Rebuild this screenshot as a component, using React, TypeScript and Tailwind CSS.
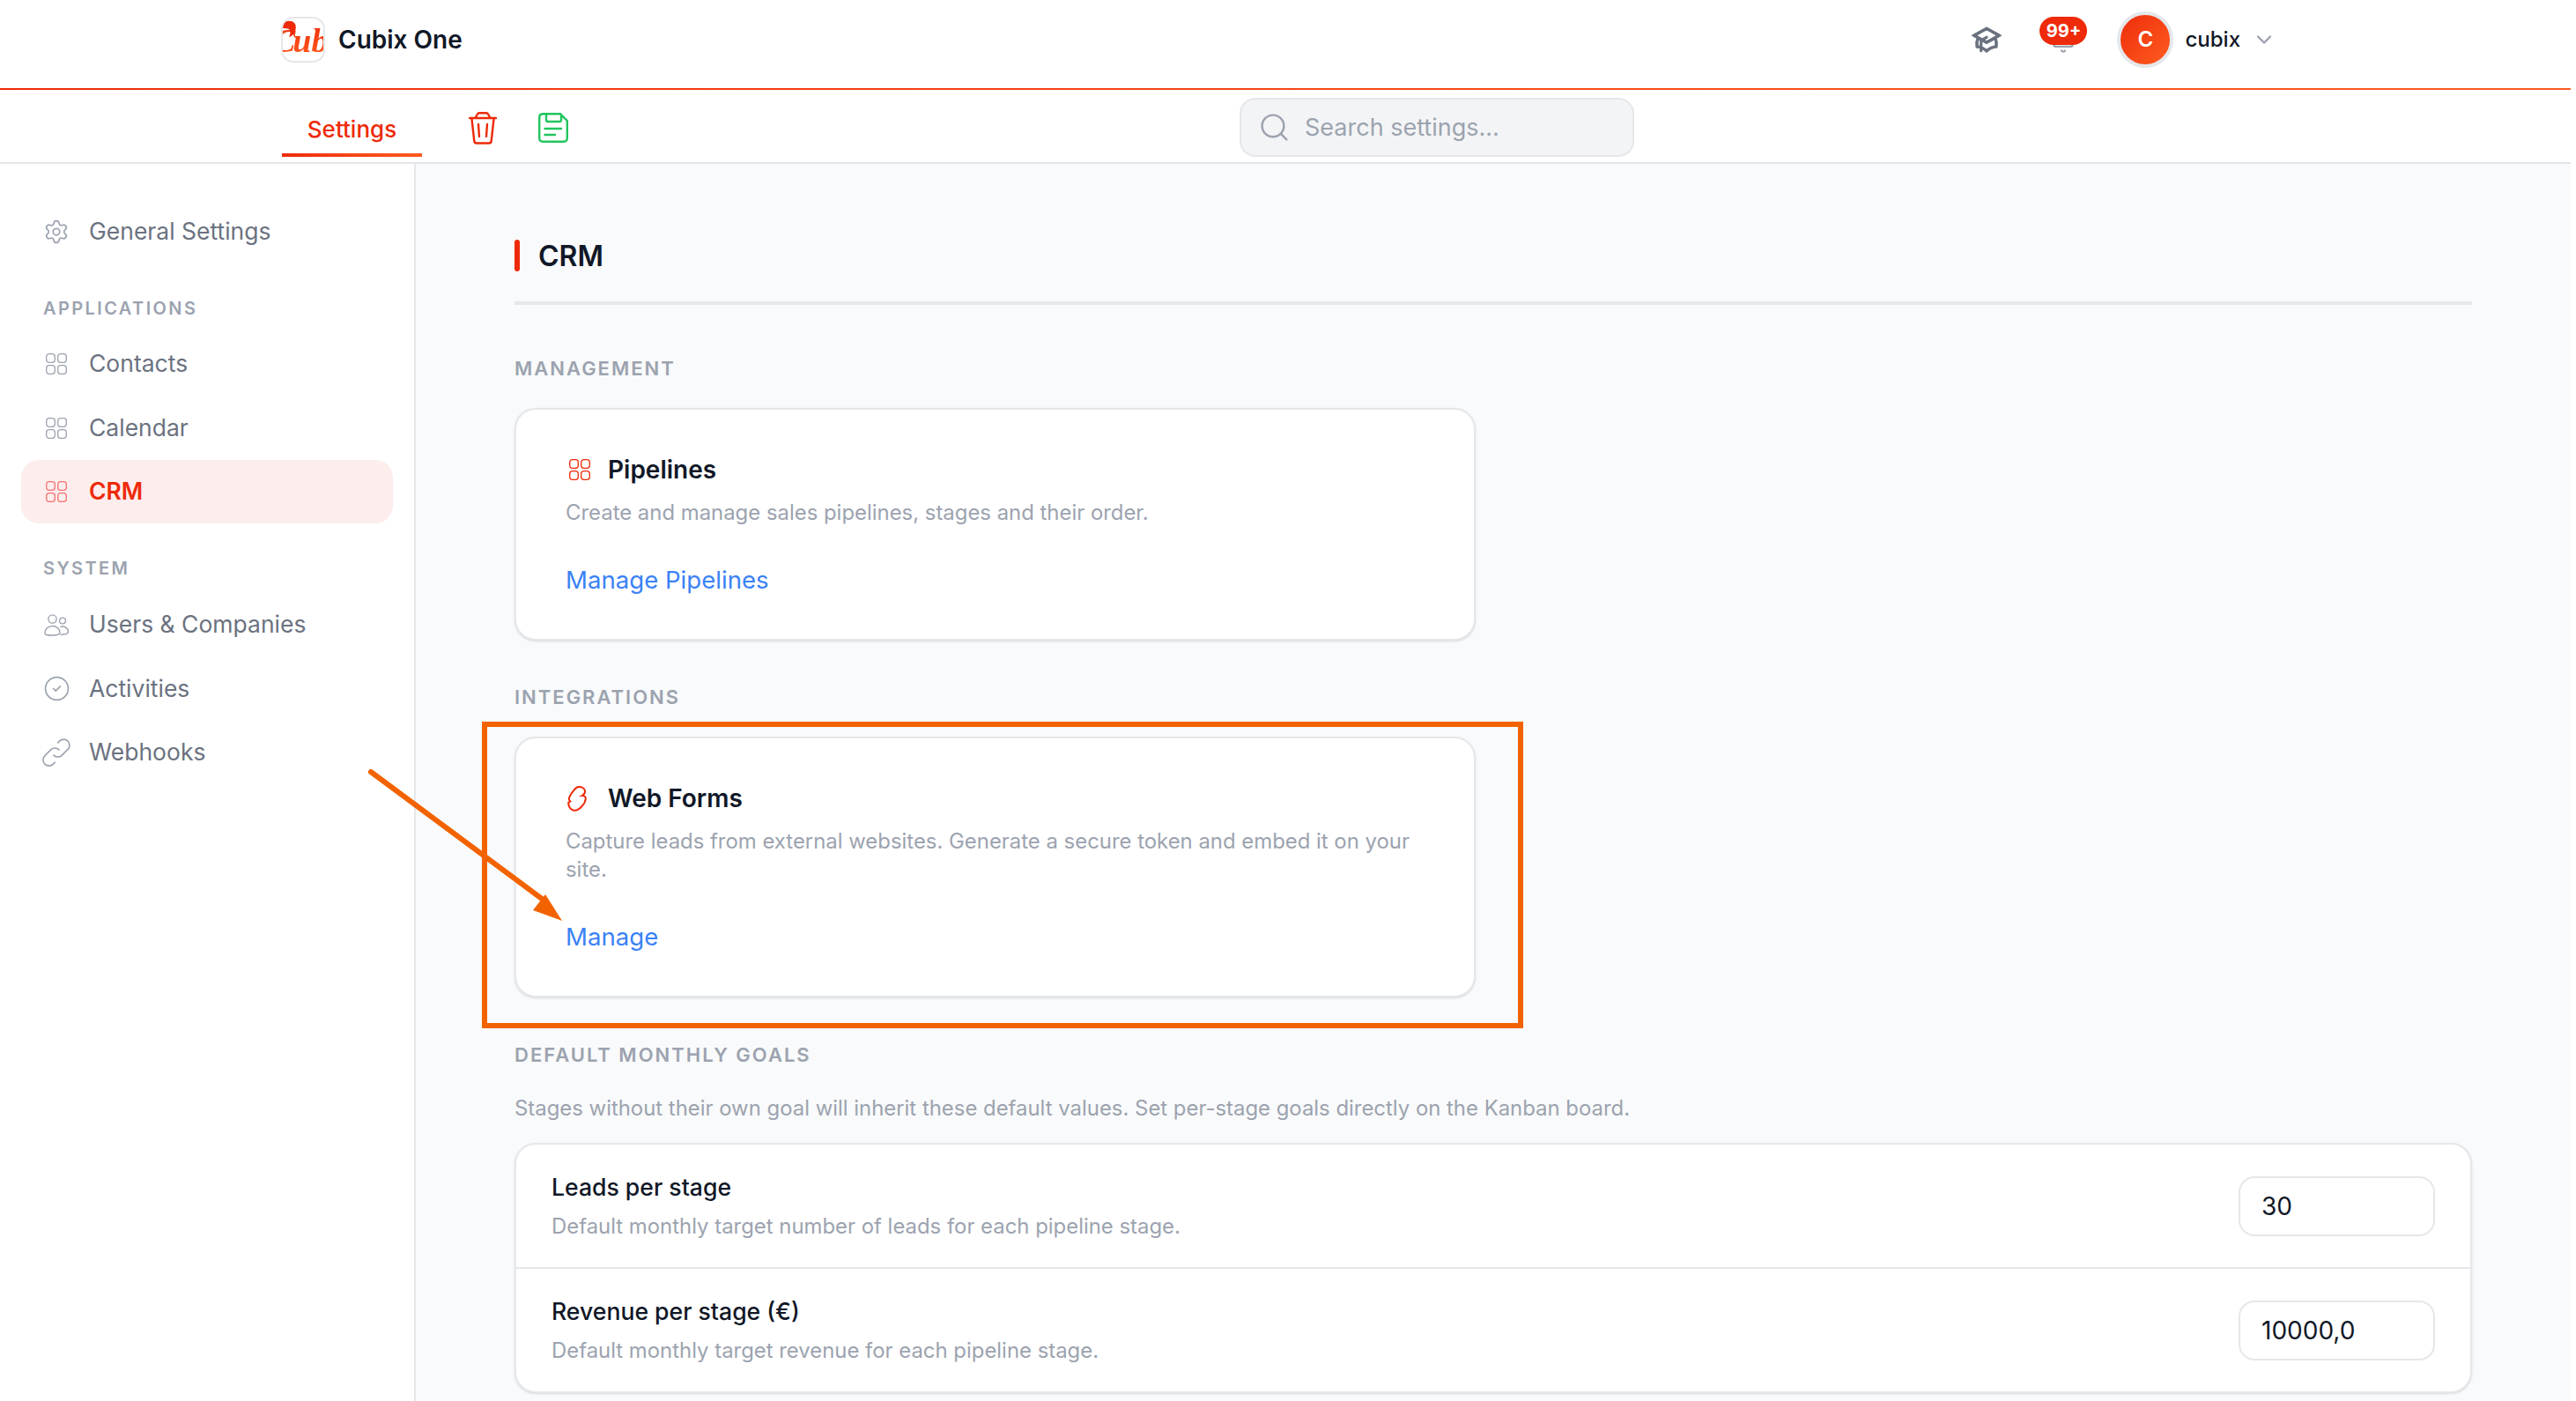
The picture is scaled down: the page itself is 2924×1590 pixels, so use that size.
import { Bell, ChevronDown, CircleCheck, Search, Settings } from "lucide-react";
import { HiOutlineAcademicCap, HiOutlineLink } from "react-icons/hi";

function GridIcon({ className }: { className?: string }) {
  return (
    <svg viewBox="0 0 24 24" fill="none" stroke="currentColor" strokeWidth="1.3" className={className}>
      <rect x="0.7" y="0.7" width="9.6" height="9.6" rx="3" />
      <rect x="13.7" y="0.7" width="9.6" height="9.6" rx="3" />
      <rect x="0.7" y="13.7" width="9.6" height="9.6" rx="3" />
      <rect x="13.7" y="13.7" width="9.6" height="9.6" rx="3" />
    </svg>
  );
}

function UsersIcon() {
  return (
    <svg viewBox="0 0 28 25" fill="none" stroke="#9ca3af" strokeWidth="1.4" className="h-[25px] w-[28px]">
      <circle cx="9.5" cy="5.5" r="4.6" />
      <circle cx="21" cy="7.5" r="3.4" />
      <path d="M1 21.5C1 17 4.5 13.5 9.5 13.5S18 17 18 20.8C18 23 16 24 9.5 24S1 23.5 1 21.5Z" />
      <path d="M18.5 14.5C23 13 27.5 16 27.5 20C27.5 22.2 25.5 23.2 18.5 23.2" />
    </svg>
  );
}

function WebFormIcon() {
  return (
    <svg viewBox="0 0 22 29" fill="none" stroke="#ee2a0a" strokeWidth="2" className="-ml-[2px] h-[29px] w-[22px]">
      <path d="M11 1.5C15 0 19.5 2 20 5.5C20.3 8 18.5 10 16.7 11C19 11 21 12 20.8 14.5C20.5 18 19 20.5 16.5 23C13.5 26.5 10 28.5 6.5 27.5C3 26.5 1 22.5 1.2 18.8L3.3 17.6C2 16.5 1.6 15 2.2 13C3 10.5 4.5 8.5 6 6.7C7.5 4.5 9 2.5 11 1.5Z" />
    </svg>
  );
}

function NavItem({ icon, label, active }: { icon: React.ReactNode; label: string; active?: boolean }) {
  return (
    <div
      className={`mx-[24px] flex h-[72px] items-center gap-[23px] rounded-[20px] pl-[26px] text-[26.5px] ${
        active ? "bg-[#fdeded] font-semibold text-[#ee2a0a]" : "text-[#6b7280]"
      }`}
    >
      <span className="flex w-[28px] shrink-0 justify-center">{icon}</span>
      {label}
    </div>
  );
}

function SectionLabel({ children, className }: { children: React.ReactNode; className?: string }) {
  return (
    <div className={`h-[28px] text-[22px] leading-[28px] font-semibold tracking-[2px] text-[#9ca3af] ${className ?? ""}`}>
      {children}
    </div>
  );
}

function ActionCard({
  icon,
  title,
  desc,
  link,
}: {
  icon: React.ReactNode;
  title: string;
  desc: string;
  link: string;
}) {
  return (
    <div className="w-[1091px] rounded-[24px] border-2 border-[#e5e7eb] bg-white px-[56px] pt-[50px] pb-[47px] shadow-sm">
      <div className="flex h-[36px] items-center">
        <span className="flex w-[48px] pl-[4px]">{icon}</span>
        <span className="text-[28px] font-semibold text-[#111827]">{title}</span>
      </div>
      <p className="mt-[15px] text-[23.9px] leading-[32px] text-[#9ca3af]">{desc}</p>
      <a className="mt-[40px] block text-[27.6px] leading-[40px] text-[#3b82f6]">{link}</a>
    </div>
  );
}

function GoalRow({ label, hint, value }: { label: string; hint: string; value: string }) {
  return (
    <div className="flex h-[139px] items-center justify-between px-[40px]">
      <div>
        <div className="text-[26.6px] leading-[36px] font-medium text-[#111827]">{label}</div>
        <div className="mt-[11px] text-[23.9px] leading-[32px] text-[#9ca3af]">{hint}</div>
      </div>
      <input
        readOnly
        value={value}
        className="h-[68px] w-[223px] rounded-[18px] border-2 border-[#e5e7eb] bg-white pl-[24px] text-[28px] text-[#111827] outline-none"
      />
    </div>
  );
}

export default function App() {
  return (
    <div className="relative flex h-[1590px] w-[2924px] overflow-hidden bg-white font-[Inter,sans-serif]">
      <div className="flex h-full w-[2918px] flex-col">
        {/* top bar */}
        <header className="flex h-[100px] shrink-0 items-center pb-[10px] pl-[319px]">
          <div className="relative h-[52px] w-[50px] overflow-hidden rounded-[14px] border-2 border-[#e5e7eb] bg-white">
            <span className="absolute top-[3px] left-[-11px] bg-gradient-to-b from-[#ee2a0a] to-[#ff5a1f] bg-clip-text font-['Liberation_Serif',serif] text-[38px] leading-[44px] font-bold whitespace-nowrap text-transparent italic">
              <span className="mr-[-3px]">C</span>ub
            </span>
            <svg viewBox="0 0 18 20" className="absolute top-[2px] left-0 h-[20px] w-[18px]">
              <path d="M0 4C4 0 10 0 13 3C16 6 15 12 12 16C10 18 8 19 7 19C9 15 9 12 7 10C5 9 2 9 0 9Z" fill="#ee2a0a" />
            </svg>
          </div>
          <span className="ml-[15px] text-[28px] font-semibold text-[#111827]">Cubix One</span>
          <HiOutlineAcademicCap className="ml-auto h-[38px] w-[38px] text-[#6b7280]" />
          <div className="relative ml-[41px] h-[64px] w-[54px]">
            <Bell className="absolute top-[20px] left-[13px] h-[28px] w-[28px] text-[#9ca3af]" strokeWidth={2} />
            <span className="absolute top-[6px] left-0 flex h-[32px] w-[54px] items-center justify-center rounded-full bg-[#ee2a0a] text-[20px] font-bold text-white">
              99+
            </span>
          </div>
          <div className="ml-[34px] flex h-[64px] w-[64px] items-center justify-center rounded-full border-4 border-[#e5e7eb] bg-gradient-to-br from-[#ee2a0a] to-[#ff5a1f] text-[24px] font-semibold text-white">
            C
          </div>
          <span className="ml-[13px] text-[24px] font-medium text-[#111827]">cubix</span>
          <ChevronDown className="mr-[334px] ml-[13px] h-[28px] w-[28px] text-[#9ca3af]" strokeWidth={2} />
        </header>
        <div className="h-[2px] shrink-0 bg-gradient-to-r from-[#ee2a0a] to-[#ff5a1f]" />

        {/* sub bar */}
        <div className="flex h-[84px] shrink-0 items-center border-b-2 border-[#e5e7eb] pt-[3px] pl-[320px]">
          <div className="relative flex h-[79px] w-[159px] items-center justify-center pt-[3px] text-[26px] font-medium text-[#ee2a0a]">
            Settings
            <span className="absolute top-[69px] right-0 left-0 h-[4px] bg-gradient-to-r from-[#ee2a0a] to-[#ff5a1f]" />
          </div>
          <svg viewBox="0 0 32 37" fill="none" stroke="#ee2a0a" strokeWidth="2.4" strokeLinecap="round" className="mt-[1px] ml-[53px] h-[37px] w-[32px]">
            <path d="M1 7L31 7M8 6L10 2.5Q10.6 1.2 12 1.2H20Q21.4 1.2 22 2.5L24 6M3.5 8L6.3 33Q6.6 35.5 9 35.5H23Q25.4 35.5 25.7 33L28.5 8M11 14L12 28M21 14L20 28" />
          </svg>
          <svg viewBox="0 0 34 34" fill="none" stroke="#22c55e" strokeWidth="2.4" strokeLinecap="round" className="mt-[1px] ml-[47px] h-[34px] w-[34px]">
            <path d="M5 1.2H25L32.8 9V29A4 4 0 0 1 29 32.8H5A4 4 0 0 1 1.2 29V5A4 4 0 0 1 5 1.2ZM9 1.5V8Q9 10 11 10H24Q26 10 26 8V2M7.5 18H26M7.5 25H19" />
          </svg>
          <div className="ml-[762px] flex h-[67px] w-[448px] items-center rounded-[18px] border-2 border-[#e5e7eb] bg-[#f3f4f6] pl-[19px] text-[27px] text-[#9ca3af]">
            <Search className="h-[37px] w-[37px]" strokeWidth={1.6} />
            <span className="ml-[16px] pt-[2px]">Search settings...</span>
          </div>
        </div>

        <div className="flex min-h-0 flex-1">
          {/* sidebar */}
          <aside className="w-[472px] shrink-0 border-r-2 border-[#e5e7eb] bg-white pt-[41px]">
            <NavItem icon={<Settings className="h-[30px] w-[30px] shrink-0 text-[#9ca3af]" strokeWidth={1.4} />} label="General Settings" />
            <div className="mt-[37px] mb-[13px] h-[28px] pl-[49px] text-[20px] leading-[28px] font-semibold tracking-[0.12em] text-[#9ca3af]">APPLICATIONS</div>
            <div className="flex flex-col gap-[0.5px]">
              <NavItem icon={<GridIcon className="h-[24px] w-[24px] text-[#9ca3af]" />} label="Contacts" />
              <NavItem icon={<GridIcon className="h-[24px] w-[24px] text-[#9ca3af]" />} label="Calendar" />
              <NavItem active icon={<GridIcon className="h-[24px] w-[24px] text-[#f87171]" />} label="CRM" />
            </div>
            <div className="mt-[37px] mb-[14px] h-[28px] pl-[49px] text-[20px] leading-[28px] font-semibold tracking-[0.12em] text-[#9ca3af]">SYSTEM</div>
            <div className="flex flex-col gap-[0.5px]">
              <NavItem icon={<UsersIcon />} label="Users & Companies" />
              <NavItem icon={<CircleCheck className="h-[31px] w-[31px] shrink-0 text-[#9ca3af]" strokeWidth={1.3} />} label="Activities" />
              <NavItem icon={<HiOutlineLink className="h-[40px] w-[40px] shrink-0 text-[#9ca3af]" style={{ strokeWidth: 1 }} />} label="Webhooks" />
            </div>
          </aside>

          {/* content */}
          <main className="min-w-0 flex-1 bg-[#f9fafb] px-[112px] pt-[86px]">
            <div className="flex h-[36px] items-center gap-[21px]">
              <span className="h-[36px] w-[6px] rounded-full bg-[#ee2a0a]" />
              <h1 className="pt-[2px] text-[32px] font-semibold text-[#111827]">CRM</h1>
            </div>
            <div className="mt-[34px] h-[4px] bg-[#e5e7eb]" />
            <SectionLabel className="mt-[58px] mb-[31px]">MANAGEMENT</SectionLabel>
            <ActionCard
              icon={<GridIcon className="h-[24px] w-[24px] text-[#ee2a0a]" />}
              title="Pipelines"
              desc="Create and manage sales pipelines, stages and their order."
              link="Manage Pipelines"
            />
            <SectionLabel className="mt-[50px] mb-[31px]">INTEGRATIONS</SectionLabel>
            <ActionCard
              icon={<WebFormIcon />}
              title="Web Forms"
              desc="Capture leads from external websites. Generate a secure token and embed it on your site."
              link="Manage"
            />
            <SectionLabel className="mt-[51px]">DEFAULT MONTHLY GOALS</SectionLabel>
            <p className="mt-[31px] text-[23.9px] leading-[32px] text-[#9ca3af]">
              Stages without their own goal will inherit these default values. Set per-stage goals directly on the Kanban board.
            </p>
            <div className="mt-[23px] overflow-hidden rounded-[24px] border-2 border-[#e5e7eb] bg-white shadow-sm">
              <GoalRow label="Leads per stage" hint="Default monthly target number of leads for each pipeline stage." value="30" />
              <div className="h-[2px] bg-[#e5e7eb]" />
              <GoalRow label="Revenue per stage (€)" hint="Default monthly target revenue for each pipeline stage." value="10000,0" />
            </div>
          </main>
        </div>
      </div>

      {/* annotation drawn over the screenshot */}
      <div className="absolute top-[819px] left-[547px] h-[348px] w-[1182px] border-[6px] border-[#f26300]" />
      <svg viewBox="0 0 240 190" className="absolute top-[870px] left-[410px] h-[190px] w-[240px]">
        <path d="M11 6L205 150" stroke="#f26300" strokeWidth="6" strokeLinecap="round" fill="none" />
        <path d="M228 175L209 145L195 163Z" fill="#f26300" />
      </svg>
    </div>
  );
}
